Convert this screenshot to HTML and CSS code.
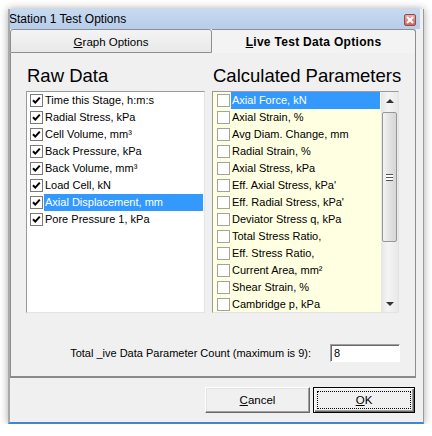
FILE: index.html
```html
<!DOCTYPE html>
<html lang="en">
<head>
    <meta charset="UTF-8">
    <title>Station 1 Test Options</title>
    <link rel="stylesheet" href="styles.css">
</head>
<body>
    <div class="window">
        <div class="titlebar">
            <span class="title">Station 1 Test Options</span>
            <span class="close">
                <svg width="8" height="8" viewBox="0 0 8 8"><path d="M1 1 L7 7 M7 1 L1 7" stroke="#fff" stroke-width="2"/></svg>
            </span>
        </div>

        <div class="tabs">
            <div class="tab"><u>G</u>raph Options</div>
            <div class="tab active"><u>L</u>ive Test Data Options</div>
        </div>

        <div class="panel">
            <div class="columns">
                <div class="column">
                    <h2>Raw Data</h2>
                    <div class="list raw">
                        <ul>
                            <li><span class="box checked"></span><span class="label">Time this Stage, h:m:s</span></li>
                            <li><span class="box checked"></span><span class="label">Radial Stress, kPa</span></li>
                            <li><span class="box checked"></span><span class="label">Cell Volume, mm³</span></li>
                            <li><span class="box checked"></span><span class="label">Back Pressure, kPa</span></li>
                            <li><span class="box checked"></span><span class="label">Back Volume, mm³</span></li>
                            <li><span class="box checked"></span><span class="label">Load Cell, kN</span></li>
                            <li class="selected"><span class="box checked"></span><span class="label">Axial Displacement, mm</span></li>
                            <li><span class="box checked"></span><span class="label">Pore Pressure 1, kPa</span></li>
                        </ul>
                    </div>
                </div>
                <div class="column">
                    <h2>Calculated Parameters</h2>
                    <div class="list calc">
                        <ul>
                            <li class="selected"><span class="box"></span><span class="label">Axial Force, kN</span></li>
                            <li><span class="box"></span><span class="label">Axial Strain, %</span></li>
                            <li><span class="box"></span><span class="label">Avg Diam. Change, mm</span></li>
                            <li><span class="box"></span><span class="label">Radial Strain, %</span></li>
                            <li><span class="box"></span><span class="label">Axial Stress, kPa</span></li>
                            <li><span class="box"></span><span class="label">Eff. Axial Stress, kPa'</span></li>
                            <li><span class="box"></span><span class="label">Eff. Radial Stress, kPa'</span></li>
                            <li><span class="box"></span><span class="label">Deviator Stress q, kPa</span></li>
                            <li><span class="box"></span><span class="label">Total Stress Ratio,</span></li>
                            <li><span class="box"></span><span class="label">Eff. Stress Ratio,</span></li>
                            <li><span class="box"></span><span class="label">Current Area, mm²</span></li>
                            <li><span class="box"></span><span class="label">Shear Strain, %</span></li>
                            <li><span class="box"></span><span class="label">Cambridge p, kPa</span></li>
                        </ul>
                        <div class="scrollbar">
                            <div class="arrow up"></div>
                            <div class="track">
                                <div class="thumb"><span class="grip"></span></div>
                            </div>
                            <div class="arrow down"></div>
                        </div>
                    </div>
                </div>
            </div>

            <div class="count">
                <span class="count-label">Total _ive Data Parameter Count (maximum is 9):</span>
                <div class="field">8</div>
            </div>
        </div>

        <div class="buttons">
            <button class="btn"><u>C</u>ancel</button>
            <button class="btn default"><span class="focus"><u>O</u>K</span></button>
        </div>
    </div>
</body>
</html>
```

FILE: styles.css
```css
body {
    margin: 0;
    background-color: #fff;
    font-family: "Liberation Sans", Arial, sans-serif;
    color: #000;
}
.window {
    box-sizing: border-box;
    width: 416px;
    height: 415px;
    margin: 9px 0 0 8px;
    border-left: 2px solid #a9a9a9;
    border-right: 1px solid #9a9a9a;
    border-bottom: 2px solid #3b87d4;
    padding-right: 7px;
    background-color: #f0f0f0;
    box-shadow: 0 0 8px rgba(0, 0, 0, 0.35);
    display: flex;
    flex-direction: column;
}

/* title bar */
.titlebar {
    height: 20px;
    margin-right: -4px;
    background: linear-gradient(#c6daf1, #b7cde9);
    display: flex;
    align-items: center;
    justify-content: space-between;
    overflow: hidden;
}
.title {
    font-size: 12px;
    margin-left: -1px;
    white-space: nowrap;
}
.close {
    box-sizing: border-box;
    width: 12px;
    height: 12px;
    margin-right: 4px;
    margin-top: 2px;
    border: 1px solid #9c4848;
    border-radius: 2px;
    background: linear-gradient(#e9aaa4, #c96a63);
    display: flex;
    align-items: center;
    justify-content: center;
}

/* tabs */
.tabs {
    display: flex;
    height: 24px;
}
.tab {
    box-sizing: border-box;
    height: 24px;
    font-size: 11.5px;
    display: flex;
    align-items: center;
    justify-content: center;
    padding-top: 1px;
}
.tab:first-child {
    width: 202px;
    border: 1px solid #8c8e94;
    border-radius: 3px 3px 0 0;
    background: linear-gradient(#f4f4f4, #e8e8e8);
}
.tab.active {
    flex: 1;
    border: 1px solid #8c8e94;
    border-left: none;
    border-bottom: none;
    border-radius: 0 3px 0 0;
    background-color: #f3f3f3;
    font-weight: bold;
    font-size: 12px;
    letter-spacing: 0.3px;
}

/* tab page */
.panel {
    box-sizing: border-box;
    height: 325px;
    border-left: 1px solid #8c8e94;
    border-right: 1px solid #8c8e94;
    border-bottom: 2px solid #8a8a8a;
    padding: 12px 15px 0 15px;
}
.columns {
    display: grid;
    grid-template-columns: 179px 187px;
    column-gap: 7px;
}
h2 {
    margin: 0 0 4px 1px;
    font-size: 18.5px;
    font-weight: normal;
    line-height: 22px;
    white-space: nowrap;
}
.list {
    box-sizing: border-box;
    height: 222px;
    border: 1px solid;
    border-color: #9a9a9a #e3e3e3 #e3e3e3 #9a9a9a;
    background-color: #fff;
    font-size: 11px;
}
.list ul {
    list-style: none;
    margin: 0;
    padding: 0;
}
.list li {
    height: 17px;
    display: flex;
    align-items: center;
}
.raw li {
    padding-left: 3px;
}
.calc {
    display: flex;
    background-color: #ffffe1;
}
.calc ul {
    flex: 1;
}
.calc li {
    padding-left: 4px;
}
.box {
    box-sizing: border-box;
    width: 13px;
    height: 13px;
    border: 1px solid #a3a3a3;
    background-color: #fff;
    flex: none;
}
.raw .box {
    border-color: #7a7a7a;
}
.box.checked {
    background: #fff url("data:image/svg+xml,%3Csvg xmlns='http://www.w3.org/2000/svg' width='11' height='11'%3E%3Cpath d='M2 5.2 L4.3 7.6 L8.8 2.6' fill='none' stroke='%23000' stroke-width='2'/%3E%3C/svg%3E") no-repeat center;
}
.label {
    flex: 1;
    margin: 0 1px 0 1px;
    padding: 0 1px;
    line-height: 17px;
    white-space: nowrap;
}
.selected .label {
    background-color: #3399ff;
    color: #fff;
}

/* vertical scroll bar of the calculated list */
.scrollbar {
    width: 17px;
    display: flex;
    flex-direction: column;
    background: linear-gradient(90deg, #e6e6e6, #f4f4f4 40%, #e9e9e9);
}
.arrow {
    height: 17px;
    display: flex;
    align-items: center;
    justify-content: center;
}
.arrow::after {
    content: "";
    border-left: 4px solid transparent;
    border-right: 4px solid transparent;
}
.arrow.up::after {
    border-bottom: 4px solid #333;
}
.arrow.down::after {
    border-top: 4px solid #333;
}
.track {
    flex: 1;
    padding: 3px 1px 0 1px;
}
.thumb {
    box-sizing: border-box;
    height: 130px;
    border: 1px solid #979797;
    border-radius: 2px;
    background: linear-gradient(90deg, #f3f3f3, #e2e2e2 50%, #d6d6d6);
    display: flex;
    align-items: center;
    justify-content: center;
}
.grip {
    width: 7px;
    height: 5px;
    border-top: 1px solid #555;
    border-bottom: 1px solid #555;
    background: linear-gradient(#fff 2px, #555 2px, #555 3px, #fff 3px);
}

/* parameter count */
.count {
    margin-top: 31px;
    display: flex;
    justify-content: flex-end;
    align-items: center;
    gap: 19px;
    font-size: 11px;
}
.field {
    box-sizing: border-box;
    width: 70px;
    height: 18px;
    border: 1px solid;
    border-color: #a0a0a0 #fff #fff #a0a0a0;
    box-shadow: inset 1px 1px #696969;
    background-color: #fff;
    padding: 2px 0 0 3px;
    font-size: 11px;
}

/* dialog buttons */
.buttons {
    height: 44px;
    display: flex;
    justify-content: flex-end;
    align-items: center;
    gap: 3px;
    padding-right: 1px;
}
.btn {
    box-sizing: border-box;
    width: 105px;
    height: 26px;
    padding: 0;
    background-color: #f0f0f0;
    border: 1px solid;
    border-color: #fff #696969 #696969 #fff;
    box-shadow: inset -1px -1px #a0a0a0, inset 1px 1px #e3e3e3;
    font-family: "Liberation Sans", Arial, sans-serif;
    font-size: 11.5px;
    color: #000;
}
.btn.default {
    width: 102px;
    border: 1px solid #000;
    box-shadow: inset 1px 1px #fff, inset -1px -1px #696969, inset -2px -2px #a0a0a0;
    display: flex;
    padding: 3px;
}
.focus {
    flex: 1;
    border: 1px dotted #000;
    display: flex;
    align-items: center;
    justify-content: center;
}
```
